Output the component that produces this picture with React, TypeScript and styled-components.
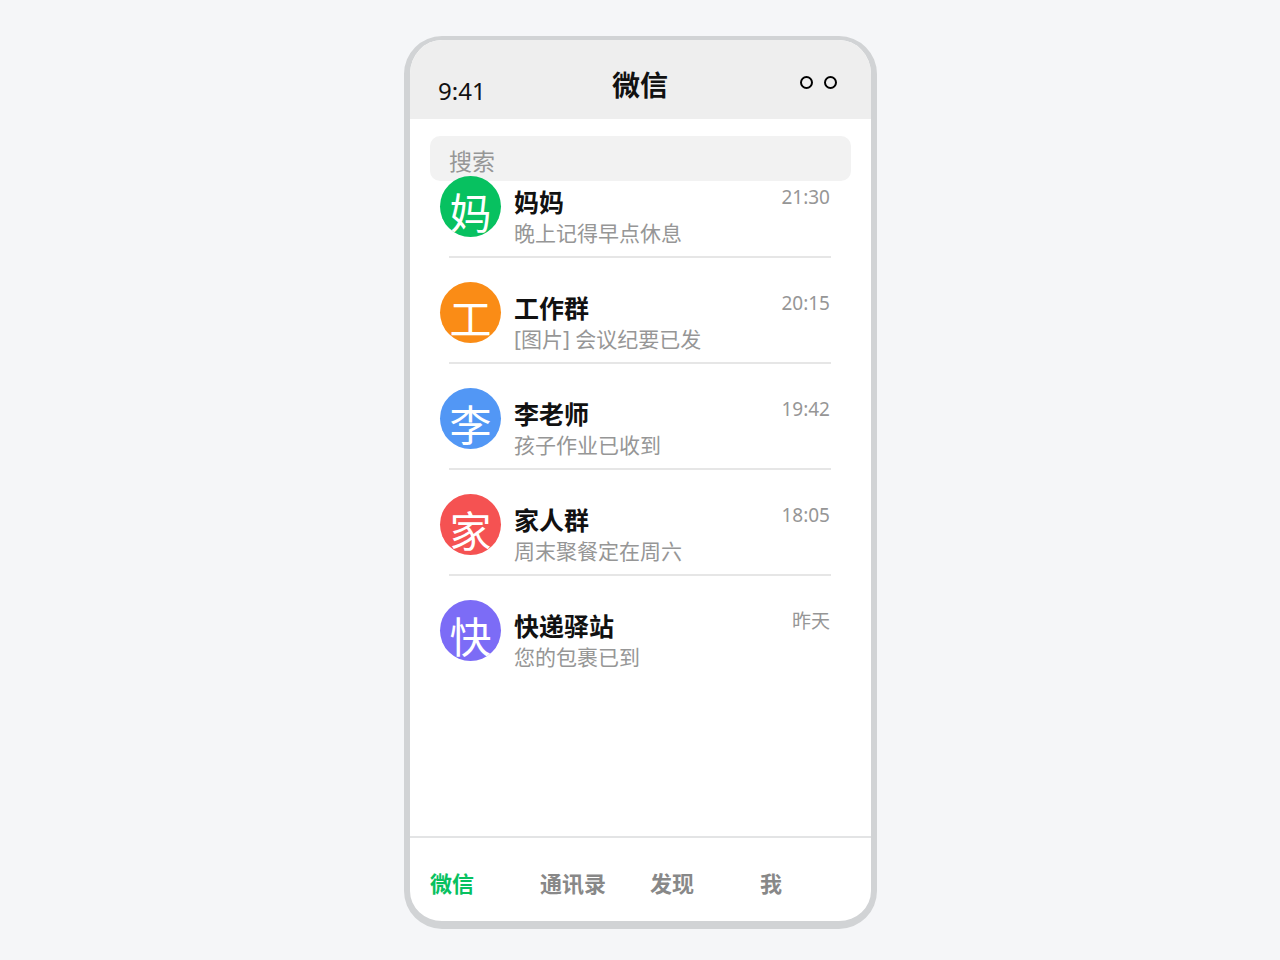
import React from "react";
import styled, { createGlobalStyle } from "styled-components";

const GlobalStyle = createGlobalStyle`
  html, body {
    margin: 0;
    padding: 0;
    background: #f5f6f8;
  }
  body {
    font-family: "Noto Sans", "Noto Sans CJK SC", sans-serif;
  }
`;

const Page = styled.div`
  box-sizing: border-box;
  width: 1280px;
  height: 960px;
  padding: 36px 0 0 404px;
`;

const Phone = styled.div`
  box-sizing: border-box;
  width: 473px;
  height: 893px;
  display: flex;
  flex-direction: column;
  background: #fff;
  border-style: solid;
  border-color: #d1d3d5;
  border-width: 4px 6px 8px;
  border-radius: 38px;
  overflow: hidden;
`;

const StatusBar = styled.header`
  box-sizing: border-box;
  height: 79px;
  flex-shrink: 0;
  display: grid;
  grid-template-columns: 1fr auto 1fr;
  background: #eeeeee;
  padding: 0 34px 0 28px;
`;

const Clock = styled.span`
  font-size: 24px;
  line-height: 32px;
  margin-top: 35px;
  color: #111;
`;

const Title = styled.h1`
  margin: 23px 0 0 5px;
  font-size: 28px;
  line-height: 44px;
  font-weight: 700;
  color: #111;
`;

const Dots = styled.div`
  justify-self: end;
  display: flex;
  gap: 11px;
  margin-top: 36px;
`;

const Dot = styled.span`
  box-sizing: border-box;
  width: 13px;
  height: 13px;
  border: 2px solid #000;
  border-radius: 50%;
`;

const Content = styled.main`
  flex: 1;
  padding: 17px 20px 0;
`;

const SearchBox = styled.div`
  box-sizing: border-box;
  height: 45px;
  background: #f2f2f2;
  border-radius: 10px;
  padding: 8px 0 0 19px;
  font-size: 23px;
  line-height: 34px;
  color: #969696;
`;

const ChatList = styled.ul`
  list-style: none;
  margin: -5px 0 0;
  padding: 0;
  display: flex;
  flex-direction: column;
  gap: 24px;
`;

const ChatRow = styled.li<{ $last?: boolean }>`
  box-sizing: border-box;
  height: 82px;
  margin: 0 20px 0 19px;
  display: flex;
  border-bottom: 2px solid ${(p) => (p.$last ? "transparent" : "#e6e6e6")};
`;

const Avatar = styled.div<{ $color: string }>`
  flex-shrink: 0;
  width: 61px;
  height: 61px;
  margin-left: -9px;
  border-radius: 50%;
  overflow: hidden;
  background: ${(p) => p.$color};
  color: #fff;
  font-size: 42px;
  line-height: 74px;
  text-align: center;
`;

const ChatBody = styled.div`
  flex: 1;
  min-width: 0;
  margin-left: 13px;
`;

const Name = styled.div`
  font-size: 25px;
  line-height: 36px;
  margin-top: 8px;
  font-weight: 700;
  color: #111;
`;

const Preview = styled.div`
  font-size: 21px;
  line-height: 30px;
  margin-top: -2px;
  color: #969696;
`;

const Time = styled.time`
  flex-shrink: 0;
  margin: 7px 1px 0 0;
  font-size: 19px;
  line-height: 28px;
  color: #969696;
`;

const TabBar = styled.nav`
  box-sizing: border-box;
  height: 85px;
  flex-shrink: 0;
  display: flex;
  padding: 29px 0 0 20px;
  border-top: 2px solid #e3e4e5;
`;

const Tab = styled.span<{ $active?: boolean }>`
  width: 110px;
  font-size: 22px;
  line-height: 32px;
  font-weight: 700;
  color: ${(p) => (p.$active ? "#07c160" : "#888888")};
`;

const chats = [
  { initial: "妈", color: "#07c160", name: "妈妈", preview: "晚上记得早点休息", time: "21:30" },
  { initial: "工", color: "#fa8c16", name: "工作群", preview: "[图片] 会议纪要已发", time: "20:15" },
  { initial: "李", color: "#5297f5", name: "李老师", preview: "孩子作业已收到", time: "19:42" },
  { initial: "家", color: "#f55252", name: "家人群", preview: "周末聚餐定在周六", time: "18:05" },
  { initial: "快", color: "#7c6cf6", name: "快递驿站", preview: "您的包裹已到", time: "昨天" },
];

const tabs = ["微信", "通讯录", "发现", "我"];

export default function App() {
  return (
    <Page>
      <GlobalStyle />
      <Phone>
        <StatusBar>
          <Clock>9:41</Clock>
          <Title>微信</Title>
          <Dots>
            <Dot />
            <Dot />
          </Dots>
        </StatusBar>
        <Content>
          <SearchBox>搜索</SearchBox>
          <ChatList>
            {chats.map((chat, i) => (
              <ChatRow key={chat.name} $last={i === chats.length - 1}>
                <Avatar $color={chat.color}>{chat.initial}</Avatar>
                <ChatBody>
                  <Name>{chat.name}</Name>
                  <Preview>{chat.preview}</Preview>
                </ChatBody>
                <Time>{chat.time}</Time>
              </ChatRow>
            ))}
          </ChatList>
        </Content>
        <TabBar>
          {tabs.map((tab, i) => (
            <Tab key={tab} $active={i === 0}>
              {tab}
            </Tab>
          ))}
        </TabBar>
      </Phone>
    </Page>
  );
}
